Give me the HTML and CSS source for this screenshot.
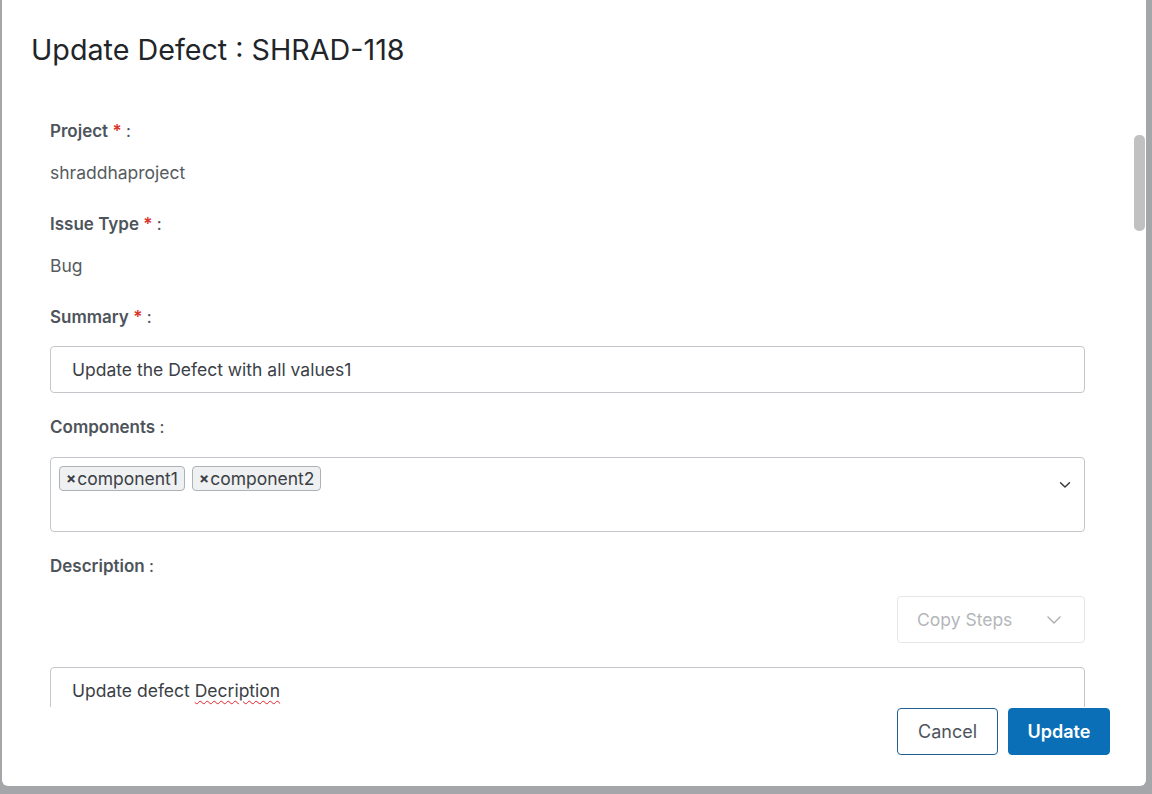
FILE: index.html
```html
<!DOCTYPE html>
<html>
<head>
<meta charset="utf-8">
<link rel="stylesheet" href="styles.css">
</head>
<body>
<div class="backdrop">
  <div class="modal">
    <div class="modal-header">
      <h1 class="title">Update Defect : SHRAD-118</h1>
    </div>
    <div class="modal-body">
      <div class="field">
        <div class="label">Project <span class="req">*</span> <span class="colon">:</span></div>
        <div class="value">shraddhaproject</div>
      </div>
      <div class="field">
        <div class="label">Issue Type <span class="req">*</span> <span class="colon">:</span></div>
        <div class="value">Bug</div>
      </div>
      <div class="field">
        <div class="label">Summary <span class="req">*</span> <span class="colon">:</span></div>
        <div class="input">Update the Defect with all values1</div>
      </div>
      <div class="field">
        <div class="label">Components <span class="colon">:</span></div>
        <div class="multi">
          <div class="tags">
            <span class="tag"><span class="x">×</span>component1</span>
            <span class="tag"><span class="x">×</span>component2</span>
          </div>
          <svg class="chev" width="12" height="8" viewBox="0 0 12 8"><path d="M1.5 1.8 L6 6 L10.5 1.8" fill="none" stroke="#333" stroke-width="1.4" stroke-linecap="round" stroke-linejoin="round"/></svg>
        </div>
      </div>
      <div class="field">
        <div class="label">Description <span class="colon">:</span></div>
        <div class="toolbar">
          <div class="copy-steps">
            <span>Copy Steps</span>
            <svg width="16" height="10" viewBox="0 0 16 10"><path d="M2 2 L8 8 L14 2" fill="none" stroke="#a9adb2" stroke-width="1.4" stroke-linecap="round" stroke-linejoin="round"/></svg>
          </div>
        </div>
        <div class="textarea"><span>Update defect </span><span class="misspelt">Decription</span></div>
      </div>
    </div>
    <div class="modal-footer">
      <button class="btn btn-cancel">Cancel</button>
      <button class="btn btn-primary">Update</button>
    </div>
    <div class="scroll-thumb"></div>
  </div>
</div>
</body>
</html>
```
FILE: styles.css
```css
html, body {
  margin: 0;
  padding: 0;
}
body {
  width: 1152px;
  height: 794px;
  overflow: hidden;
  background: #a4a6a9;
  font-family: Inter, "Noto Sans", "Liberation Sans", sans-serif;
}
.backdrop {
  height: 794px;
  display: flex;
  align-items: flex-start;
}
.modal {
  position: relative;
  margin-left: 2px;
  width: 1144px;
  height: 786px;
  background: #ffffff;
  border-radius: 0 0 6px 6px;
  display: flex;
  flex-direction: column;
}
.modal-header {
  height: 100px;
  flex: none;
  padding-left: 29px;
  box-sizing: border-box;
}
.title {
  margin: 0;
  padding-top: 32px;
  font-size: 28.7px;
  line-height: 36px;
  font-weight: 400;
  color: #212529;
}
.modal-body {
  height: 607px;
  flex: none;
  overflow: hidden;
  padding: 19px 61px 0 48px;
  box-sizing: border-box;
}
.field {
  margin-bottom: 22px;
}
.label {
  font-size: 17px;
  line-height: 24px;
  font-weight: 600;
  color: #4d545b;
}
.req {
  color: #d9342b;
}
.colon {
  font-weight: 400;
}
.value {
  margin-top: 18px;
  font-size: 17.5px;
  line-height: 24px;
  color: #555b61;
  padding-bottom: 5px;
}
.input {
  margin-top: 17px;
  height: 47px;
  box-sizing: border-box;
  border: 1px solid #c3c7cb;
  border-radius: 4px;
  padding: 0 21px;
  display: flex;
  align-items: center;
  font-size: 17.5px;
  color: #3b4046;
}
.multi {
  margin-top: 18px;
  height: 75px;
  box-sizing: border-box;
  border: 1px solid #c3c7cb;
  border-radius: 4px;
  display: flex;
  align-items: flex-start;
  justify-content: space-between;
  padding: 8px 13px 0 8px;
}
.tags {
  display: flex;
  gap: 7px;
}
.tag {
  display: inline-flex;
  align-items: center;
  height: 25px;
  box-sizing: border-box;
  padding: 0 6px 0 6px;
  background: #eef0f1;
  border: 1px solid #aeb2b6;
  border-radius: 4px;
  font-size: 17.5px;
  color: #3b4046;
}
.x {
  font-weight: 700;
  font-size: 15px;
  margin-right: 1px;
}
.chev {
  margin-top: 15px;
}
.toolbar {
  margin-top: 18px;
  display: flex;
  justify-content: flex-end;
}
.copy-steps {
  width: 188px;
  height: 47px;
  box-sizing: border-box;
  border: 1px solid #e4e6e9;
  border-radius: 4px;
  display: flex;
  align-items: center;
  justify-content: space-between;
  padding: 0 22px 0 19px;
  font-size: 17.5px;
  color: #b3b6ba;
}
.textarea {
  margin-top: 24px;
  height: 150px;
  box-sizing: border-box;
  border: 1px solid #c3c7cb;
  border-radius: 4px;
  padding: 11px 21px;
  font-size: 17.5px;
  line-height: 24px;
  color: #3b4046;
}
.misspelt {
  text-decoration: underline wavy #e5252a;
  text-decoration-thickness: 1px;
  text-underline-offset: 3px;
}
.modal-footer {
  flex: 1;
  display: flex;
  justify-content: flex-end;
  align-items: flex-start;
  gap: 10px;
  padding: 1px 36px 0 0;
}
.btn {
  height: 47px;
  border-radius: 4px;
  font-family: Inter, "Noto Sans", "Liberation Sans", sans-serif;
  font-size: 18px;
  padding: 0;
}
.btn-cancel {
  width: 101px;
  background: #ffffff;
  border: 1px solid #1f5f94;
  color: #4d545b;
}
.btn-primary {
  width: 102px;
  background: #0b6fb8;
  border: 1px solid #0b6fb8;
  color: #ffffff;
  font-weight: 600;
}
.scroll-thumb {
  position: absolute;
  left: 1132px;
  top: 135px;
  width: 11px;
  height: 96px;
  border-radius: 5px;
  background: #c1c1c1;
}
```
